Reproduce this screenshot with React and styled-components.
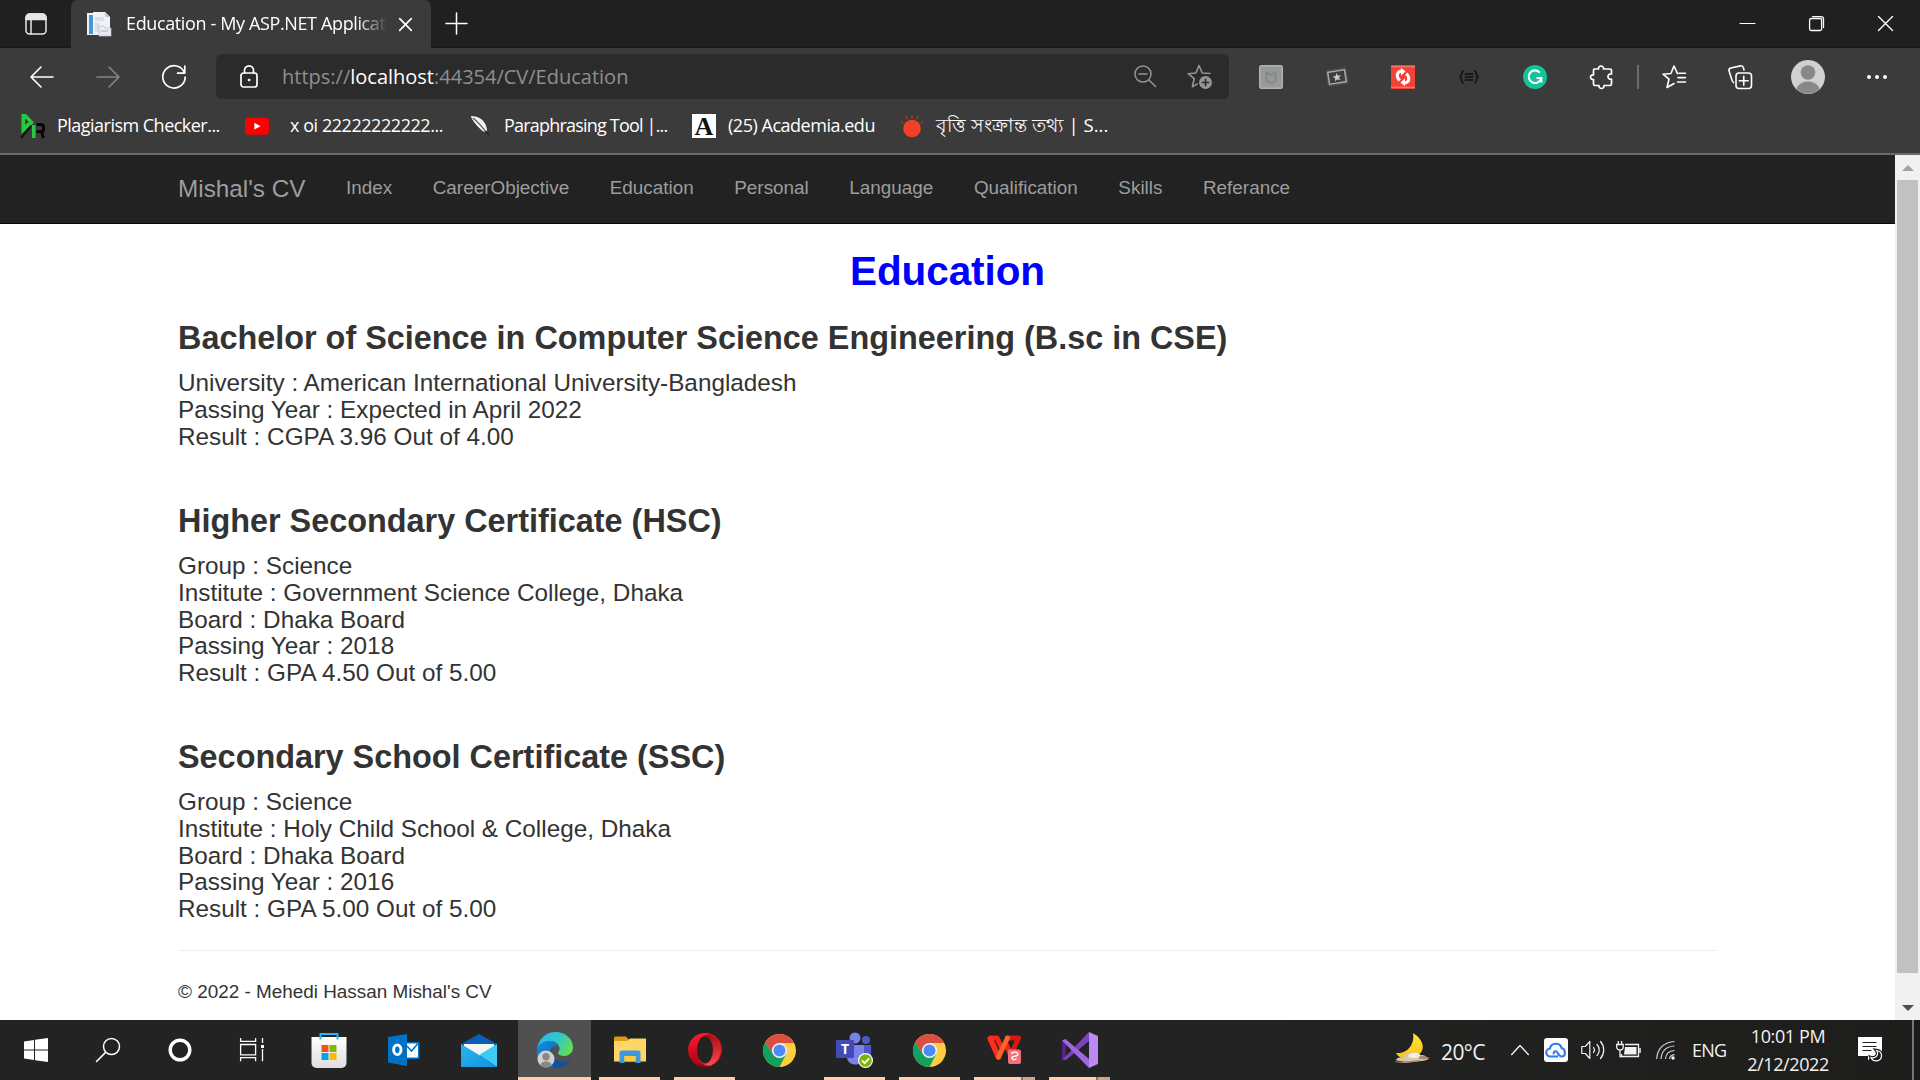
import React from 'react';
import styled, { createGlobalStyle } from 'styled-components';

const GlobalStyle = createGlobalStyle`
  *, *::before, *::after { box-sizing: border-box; }
  body { margin: 0; background: #fff; overflow: hidden; }
  svg { display: block; flex: none; overflow: visible; }
`;

const ui = `'Segoe UI', 'Open Sans', 'Noto Sans', sans-serif`;
const pageFont = `'Liberation Sans', Arial, sans-serif`;

const Screen = styled.div`
  width: 1920px;
  height: 1080px;
  display: flex;
  flex-direction: column;
  overflow: hidden;
  font-family: ${ui};
`;

/* ---------- browser chrome ---------- */
const TabStrip = styled.div`
  height: 48px;
  flex: none;
  display: flex;
  background: #202020;
  box-shadow: inset 0 -1px 0 #1a1a1a;
`;
const TabActions = styled.div`
  width: 71px;
  padding: 13px 0 0 25px;
`;
const Tab = styled.div`
  width: 360px;
  height: 48px;
  padding: 0 18px 0 16px;
  display: flex;
  align-items: center;
  background: #3b3b3b;
  border-radius: 7px 7px 0 0;
`;
const TabTitle = styled.div`
  width: 262px;
  margin: -2px 11px 0 15px;
  white-space: nowrap;
  font-size: 18px;
  line-height: 26px;
  letter-spacing: ${p => p.$ls || 0}px;
  color: #fff;
  mask-image: linear-gradient(90deg, #000 88%, transparent 100%);
`;
const NewTab = styled.div`
  padding: 13px 0 0 15px;
  flex: 1;
`;
const WindowButtons = styled.div`
  display: flex;
  height: 47px;
`;
const WindowButton = styled.div`
  width: 69px;
  display: flex;
  align-items: center;
  justify-content: center;
`;

const Toolbar = styled.div`
  height: 57px;
  flex: none;
  display: flex;
  align-items: center;
  background: #3b3b3b;
`;
const NavButtons = styled.div`
  width: 216px;
  display: flex;
  gap: 42px;
  padding-left: 30px;
`;
const AddressField = styled.div`
  width: 1013px;
  height: 45px;
  display: flex;
  align-items: center;
  padding: 0 17px 0 24px;
  background: #2b2b2b;
  border-radius: 6px;
`;
const Url = styled.div`
  flex: 1;
  margin: 0 0 0 24px;
  font-size: 20px;
  line-height: 30px;
  letter-spacing: ${p => p.$ls || 0}px;
  color: #8f8f8f;
  white-space: nowrap;
`;
const Host = styled.span`
  color: #fff;
`;
const FieldActions = styled.div`
  display: flex;
  gap: 31px;
`;
const Extensions = styled.div`
  display: flex;
  align-items: center;
  margin-left: 9px;
`;
const Slot = styled.div`
  width: ${p => p.$w || 66}px;
  height: 45px;
  display: flex;
  align-items: center;
  justify-content: center;
`;
const Divider = styled.div`
  width: 2px;
  height: 24px;
  margin: 0 2px 0 3px;
  background: #6b6b6b;
`;
const Bookmarks = styled.div`
  height: 50px;
  flex: none;
  display: flex;
  padding: 6px 0 0 21px;
  background: #3b3b3b;
  border-bottom: 2px solid #6a6a6a;
`;
const Bookmark = styled.div`
  width: ${p => p.$w}px;
  height: 30px;
  display: flex;
  align-items: center;
  gap: ${p => p.$gap || 12}px;
`;
const BookmarkText = styled.span`
  margin-top: -2px;
  font-size: ${p => p.$size || 18}px;
  line-height: 28px;
  letter-spacing: ${p => p.$ls || 0}px;
  color: #fff;
  white-space: nowrap;
`;

/* ---------- page ---------- */
const Viewport = styled.div`
  height: 865px;
  flex: none;
  display: flex;
  overflow: hidden;
`;
const Page = styled.div`
  width: 1895px;
  font-family: ${pageFont};
  color: #333;
  background: #fff;
`;
const Navbar = styled.nav`
  height: 69px;
  padding-left: 178px;
  display: flex;
  background: #222;
  border-bottom: 1px solid #080808;
  color: #9d9d9d;
`;
const Brand = styled.div`
  padding: 20px 20.25px 0 0;
  font-size: 24.3px;
  line-height: 27px;
  white-space: nowrap;
`;
const NavLink = styled.div`
  padding: 19px 20.25px 0;
  font-size: 18.9px;
  line-height: 27px;
  white-space: nowrap;
`;
const Content = styled.main`
  width: 1539px;
  margin-left: 178px;
  padding-top: 24.5px;
`;
const Title = styled.h2`
  margin: 0 0 28px;
  font-size: 40.5px;
  line-height: 44.55px;
  text-align: center;
  letter-spacing: -0.1px;
  color: #00f;
`;
const Section = styled.section`
  margin-bottom: ${p => p.$gap}px;
`;
const Degree = styled.h3`
  margin: 0 0 13.5px;
  font-size: 32.4px;
  line-height: 35.64px;
  white-space: nowrap;
`;
const Detail = styled.div`
  font-size: 24.3px;
  line-height: 26.73px;
  white-space: nowrap;
`;
const Footer = styled.footer`
  padding-top: 26.5px;
  border-top: 1px solid #eee;
  font-size: 18.9px;
  line-height: 27px;
`;
const Scrollbar = styled.div`
  width: 25px;
  display: flex;
  flex-direction: column;
  align-items: center;
  background: #f1f1f1;
`;
const Arrow = styled.div`
  height: ${p => (p.$down ? 47 : 25)}px;
  width: 100%;
  display: flex;
  justify-content: center;
  align-items: ${p => (p.$down ? 'flex-end' : 'flex-start')};
  padding: ${p => (p.$down ? '0 0 9px' : '10px 0 0')};
`;
const Thumb = styled.div`
  width: 21px;
  height: 793px;
  background: #c1c1c1;
`;

/* ---------- taskbar ---------- */
const Taskbar = styled.div`
  height: 60px;
  flex: none;
  display: flex;
  background: linear-gradient(90deg, #232323 0, #232323 65%, #1d1d1b 100%);
`;
const SystemButton = styled.div`
  width: 72px;
  display: flex;
  align-items: center;
  justify-content: center;
`;
const Apps = styled.div`
  display: flex;
  margin-left: 3px;
  flex: 1;
`;
const TaskbarApp = styled.div`
  width: ${p => (p.$active ? 76 : 75)}px;
  height: 60px;
  display: flex;
  flex-direction: column;
  align-items: center;
  padding: ${p => (p.$active ? '0 1px 0 2px' : '0')};
`;
const AppFace = styled.div`
  height: 57px;
  width: 100%;
  padding-top: 3px;
  display: flex;
  align-items: center;
  justify-content: center;
  background: ${p => (p.$active ? '#505050' : 'transparent')};
`;
const Underline = styled.div`
  width: ${p => (p.$active ? '100%' : '61px')};
  height: 3px;
  background: ${p => (p.$stacked
    ? 'linear-gradient(90deg, #ffcfad 47px, #8d7465 47px, #8d7465 49px, #cba58c 49px)'
    : '#ffcfad')};
`;
const Tray = styled.div`
  width: 527px;
  display: flex;
  align-items: center;
  color: #f2f2f2;
  border-right: 6px solid #1b1b19;
`;
const Weather = styled.div`
  width: 117px;
  display: flex;
  align-items: center;
  gap: 11px;
  margin-left: 1px;
  font-size: 21px;
  line-height: 30px;
  white-space: nowrap;
`;
const Temperature = styled.span`
  margin-top: 4px;
  letter-spacing: -0.6px;
`;
const TrayIcon = styled.div`
  width: ${p => p.$w}px;
  display: flex;
`;
const Language = styled.div`
  width: 54px;
  font-size: 18px;
  letter-spacing: -0.8px;
`;
const Clock = styled.div`
  width: 84px;
  display: flex;
  flex-direction: column;
  align-items: center;
  font-size: 18px;
  line-height: 28px;
  letter-spacing: -0.4px;
  white-space: nowrap;
`;
const Notifications = styled.div`
  margin-left: 28px;
  width: 54px;
`;
const ShowDesktop = styled.div`
  width: 2px;
  height: 60px;
  background: #777;
`;

/* ---------- icons ---------- */
const Line = ({ w = 24, h = 24, c = '#fff', sw = 1.6, children }) => (
  <svg width={w} height={h} viewBox={`0 0 ${w} ${h}`} fill="none" stroke={c} strokeWidth={sw} strokeLinecap="round" strokeLinejoin="round">
    {children}
  </svg>
);

const TabsIcon = () => (
  <Line w={22} h={22} c="#e6e6e6" sw={1.5}>
    <rect x="1" y="1" width="20" height="20" rx="3.5" />
    <path d="M1 5a4 4 0 0 1 4-4h12a4 4 0 0 1 4 4v1.5H1z" fill="#e6e6e6" />
    <path d="M6 7v14" />
  </Line>
);
const Favicon = () => (
  <svg width="24" height="24" viewBox="0 0 24 24">
    <path d="M0 1h17v22H0z" fill="#e9f0f7" />
    <path d="M2 3h4v19H2z" fill="#4a97cf" />
    <path d="M6 0h12l5 5v17H6z" fill="#f1f2f6" />
    <path d="M18 0v5h5z" fill="#c3cad8" />
    <path d="M8 5h9v4H8zM8 11h4v9H8z" fill="#dcdfe8" />
    <path d="M12 14h5l1 2h6v8H12z" fill="#e9ebf2" stroke="#b9bfcc" strokeWidth=".7" />
    <path d="M14 18h7v2h-7z" fill="#c9ced9" />
  </svg>
);
const BackIcon = ({ dim, flip }) => (
  <Line c={dim ? '#858585' : '#fff'} sw={1.6}>
    <path d={flip ? 'M1 12h22M13 2l10 10-10 10' : 'M23 12H1M11 2 1 12l10 10'} />
  </Line>
);
const ReloadIcon = () => (
  <Line sw={1.7}>
    <path d="M22.6 8.2A11.2 11.2 0 1 0 23.2 12M22.8 1v7.2h-7.2" />
  </Line>
);
const LockIcon = () => (
  <Line w={18} h={24} sw={1.7}>
    <rect x="1" y="8" width="16" height="14" rx="2.5" />
    <path d="M4.5 8V5.3a4.5 4.5 0 0 1 9 0V8" />
    <circle cx="9" cy="15" r="1" fill="#fff" strokeWidth=".8" />
  </Line>
);
const ZoomOutIcon = () => (
  <Line w={22} h={24} c="#959595" sw={1.5}>
    <circle cx="9" cy="10" r="8" />
    <path d="m15 16 6.5 6.5M5 10h8" />
  </Line>
);
const AddStarIcon = () => (
  <Line w={25} h={25} c="#959595" sw={1.6}>
    <path d="M23 9.5 15.200 9 12 1.500 8.900 9l-7.700.7 6 5-1.900 8 5-2.800" />
    <circle cx="18.500" cy="18.500" r="6.500" fill="#959595" stroke="none" />
    <path d="M18.500 15.300v6.400M15.300 18.500h6.400" stroke="#2b2b2b" />
  </Line>
);
const McAfeeIcon = () => (
  <svg width="24" height="24" viewBox="0 0 24 24">
    <rect x=".7" y=".7" width="22.6" height="22.6" rx="1.5" fill="#999" stroke="#aab4b9" strokeWidth="1.4" />
    <path d="M7.500 7.500v8.500l4.500 2 4.500-2V7.500L12 10z" fill="none" stroke="#84898c" strokeWidth="2.2" />
  </svg>
);
const TicketIcon = () => (
  <svg width="24" height="24" viewBox="0 0 24 24">
    <g transform="rotate(-9 12 12)">
      <rect x="1.500" y="3.500" width="21" height="17" rx="2" fill="#4b4b4b" />
      <rect x="3.500" y="6" width="17" height="12" fill="#3d3d3d" stroke="#aaa" strokeWidth="1.5" />
      <path d="m12 8 1.200 2.800 3 .2-2.300 1.900.8 2.900-2.700-1.600-2.700 1.600.8-2.900L7.800 11l3-.2z" fill="#ccc" />
    </g>
  </svg>
);
const SyncIcon = () => (
  <svg width="24" height="24" viewBox="0 0 24 24">
    <rect width="24" height="24" rx="1" fill="#f44336" />
    <path d="M0 1.700h24M0 22.300h24" stroke="#ff8177" />
    <path d="M8.700 15.500C4.500 11 6 6.500 10.500 6M15.300 8.500c4.200 4.500 2.700 9-1.800 9.500" fill="none" stroke="#fff" strokeWidth="3" />
    <path d="m10 2.800 4.500 3.700-4.500 4zM14 21.200l-4.500-3.700 4.500-4z" fill="#fff" />
  </svg>
);
const BracesIcon = () => (
  <Line w={20} h={14} c="#111" sw={1.7}>
    <path d="M4 1.200C2.200 1.200 3.500 6 1 7c2.500 1 1.200 5.800 3 5.800M16 1.200c1.800 0 .5 4.800 3 5.800-2.500 1-1.200 5.800-3 5.800M6.500 4h7M6.500 7h7M6.500 10h7" />
  </Line>
);
const GrammarlyIcon = () => (
  <svg width="24" height="24" viewBox="0 0 24 24">
    <circle cx="12" cy="12" r="12" fill="#15c39a" />
    <path d="M16.800 7.600A6.300 6.300 0 1 0 18.200 13h-4.700M18.300 13v4.500" fill="none" stroke="#fff" strokeWidth="2.1" />
  </svg>
);
const PuzzleIcon = () => (
  <Line sw={1.7}>
    <path d="M5 4h4.500c-.4-4 5.400-4 5 0H21c1 0 1.500.5 1.500 1.500V9c-4.700-.8-4.700 6 0 5.200V19c0 1-.5 1.500-1.500 1.500h-6c.4 4-5.400 4-5 0H6c-1 0-1.500-.5-1.500-1.500v-4.500c-4 .4-4-5 0-4.600V5.500C4.500 4.500 4.500 4 5 4z" />
  </Line>
);
const FavoritesIcon = () => (
  <Line sw={1.6}>
    <path d="M15.500 8.600 12 1 8.900 8.500 1 9.200l6 5L5 22.500l7-4M17 8.200h6.500M16 12.600h7.500M15.500 17h8" />
  </Line>
);
const CollectionsIcon = () => (
  <Line sw={1.6}>
    <path d="M5.500 17.500C4 16.500 3.800 15 3.300 13L1 5.800C.6 4 1.300 3.400 2.800 3L12.500.9c1.500-.4 2.500.4 2.900 1.800l.6 2.300" />
    <rect x="8" y="8" width="15.500" height="15.500" rx="3" />
    <path d="M15.750 11.200v9M11.200 15.750h9" />
  </Line>
);
const Avatar = ({ s = 34 }) => (
  <svg width={s} height={s} viewBox="0 0 34 34">
    <circle cx="17" cy="17" r="17" fill="#d2d0ce" />
    <circle cx="17" cy="12.500" r="7.300" fill="#8a8886" />
    <path d="M5.500 29.300C8 19 26 19 28.500 29.300a17 17 0 0 1-23 0z" fill="#8a8886" />
  </svg>
);
const DotsIcon = () => (
  <svg width="22" height="6" viewBox="0 0 22 6" fill="#fff">
    <circle cx="3" cy="3" r="2" /><circle cx="11" cy="3" r="2" /><circle cx="19" cy="3" r="2" />
  </svg>
);

const PlagIcon = () => (
  <svg width="24" height="24" viewBox="0 0 24 24">
    <path d="M.5 0H5l8 8.500L.5 20zM4 4.500v6l4-2.600z" fill="#27c93f" fillRule="evenodd" />
    <path d="M0 24 10 12" stroke="#111" strokeWidth="2" />
    <path d="M11 11h3.500v13H11z" fill="#27c93f" />
    <path d="M15.500 10.500h4.500c3.500 0 3.500 7 .5 7.200l2 6.300M15.500 17.700h5" fill="none" stroke="#050505" strokeWidth="2.8" />
  </svg>
);
const YouTubeIcon = () => (
  <svg width="24" height="24" viewBox="0 0 24 24">
    <rect x="0" y="3.700" width="24" height="17" rx="3.500" fill="red" />
    <path d="m9.300 8.800 6.300 3.400-6.300 3.400z" fill="#fff" />
  </svg>
);
const FeatherIcon = () => (
  <svg width="24" height="24" viewBox="0 0 24 24">
    <path d="M3 1.500c8 0 13 3 16 9 1.500 3 1.500 6 1.700 8-2.700.5-5-.5-8-3.500C8.500 11 4.500 6 3 1.500z" fill="#f2f2f2" stroke="#222" strokeWidth=".8" />
    <path d="M6 4c6 5 11 11 15 16.500" stroke="#555" strokeWidth="1.1" fill="none" />
    <path d="m18.500 17 3.500 4" stroke="#222" strokeWidth="1.800" />
  </svg>
);
const AcademiaBox = styled.span`
  width: 24px;
  height: 24px;
  background: #fff;
  color: #111;
  font: bold 26px/25px 'Liberation Serif', serif;
  display: flex;
  justify-content: center;
`;
const EggIcon = () => (
  <svg width="24" height="24" viewBox="0 0 24 24">
    <ellipse cx="12" cy="14.500" rx="8.800" ry="8.700" fill="#f04124" />
    <path d="M12 1v4M6 2l1.800 3.500M18 2l-1.800 3.500M.5 7.500l3.300 2M23.500 7.500l-3.300 2" stroke="#c83a25" />
  </svg>
);

const WindowsLogo = () => (
  <svg width="24" height="24" viewBox="0 0 24 24" fill="#fff">
    <path d="M0 3.500 10 2v9.500H0zM11 1.800 24 0v11.500H11zM0 12.500h10V22L0 20.500zM11 12.500h13V24l-13-1.800z" />
  </svg>
);
const SearchIcon = () => (
  <Line sw={1.5}><circle cx="15.500" cy="8.500" r="8" /><path d="M9.600 14.400.5 23.500" /></Line>
);
const CortanaIcon = () => (
  <Line><circle cx="12" cy="12" r="9.800" strokeWidth="3.400" /></Line>
);
const TaskViewIcon = () => (
  <svg width="24" height="24" viewBox="0 0 24 24" fill="none" stroke="#fff" strokeWidth="1.3">
    <path d="M.6 0v3.400h15V0M.6 6.500h15v10.300H.6zM.6 23.200v-3.500h15v3.500M22.500 0v5M22.500 11v12.200" />
    <rect x="21" y="7" width="3" height="3" fill="#fff" stroke="none" />
  </svg>
);
const StoreIcon = () => (
  <svg width="36" height="36" viewBox="0 0 36 36">
    <defs><linearGradient id="bag" x2="0" y2="1"><stop stopColor="#fff" /><stop offset="1" stopColor="#dedede" /></linearGradient></defs>
    <path d="M.5 5h35v26a5 5 0 0 1-5 5h-25a5 5 0 0 1-5-5z" fill="url(#bag)" />
    <path d="M9.500 7.500V2h17v5.500" fill="none" stroke="#27b3ee" strokeWidth="2" />
    <path d="M10.500 13h7v7h-7z" fill="#f25022" /><path d="M18.500 13h7v7h-7z" fill="#7fba00" />
    <path d="M10.500 21h7v7h-7z" fill="#00a4ef" /><path d="M18.500 21h7v7h-7z" fill="#ffb900" />
  </svg>
);
const OutlookIcon = () => (
  <svg width="32" height="32" viewBox="0 0 32 32">
    <path d="M18 8h12.500a1 1 0 0 1 1 1v15a1 1 0 0 1-1 1H18z" fill="#0072c6" />
    <path d="M19 9.500h11v14H19z" fill="#fff" />
    <path d="m19 12 4.500 5 6.500-7.500" fill="none" stroke="#0072c6" strokeWidth="1.5" />
    <path d="M0 3 19 0v32L0 28.500z" fill="#0072c6" />
    <ellipse cx="9.300" cy="15.800" rx="3.700" ry="4.800" fill="none" stroke="#fff" strokeWidth="2.9" />
  </svg>
);
const MailIcon = () => (
  <svg width="36" height="34" viewBox="0 0 36 34">
    <defs><linearGradient id="mail" x2="1" y2="1"><stop stopColor="#28b5f0" /><stop offset="1" stopColor="#1591e0" /></linearGradient></defs>
    <path d="M0 11 18 1l18 10v4H0z" fill="#0a5cb5" />
    <path d="M3 11h30v12H3z" fill="#f4f4f4" />
    <path d="M36 11v23L18 22z" fill="#3bcbf5" />
    <path d="M0 34h36L18 22 0 11z" fill="url(#mail)" />
  </svg>
);
const EdgeIcon = () => (
  <svg width="36" height="36" viewBox="0 0 36 36">
    <defs>
      <linearGradient id="edgeTop" x1="0" y1=".3" x2="1" y2=".7"><stop stopColor="#2fb4ee" /><stop offset=".5" stopColor="#30c8c8" /><stop offset="1" stopColor="#66e04c" /></linearGradient>
      <linearGradient id="edgeLow" x2="1" y2="1"><stop stopColor="#1390e0" /><stop offset="1" stopColor="#1057a8" /></linearGradient>
    </defs>
    <path d="M0 18C1 7 9 0 18.500 0 29 0 36 7.500 36 15c0 6-4.500 9-9 9-4 0-6-1.500-6-3 0-1 1.500-1.500 1.500-4.500 0-4-4-7.500-10-7.500C6 9 1 13 0 18z" fill="url(#edgeTop)" />
    <path d="M0 18c1-5.500 6-9 12-9 5.500 0 9 2.500 10 5.500-5-2.500-9 1.500-9 7 0 7 6 13 14 13.500C12 39.500-1 30 0 18z" fill="url(#edgeLow)" />
    <path d="M17.500 15.500c-3 2-4 7-.5 10.500 4.500 4.300 11.500 4.200 16.500 1.500-3 6-9.500 9-15.500 8.300C10 32 10 17 17.500 15.500z" fill="#1250a0" />
    <g transform="translate(0.500 18.500)"><Avatar s={17} /></g>
  </svg>
);
const ExplorerIcon = () => (
  <svg width="32" height="28" viewBox="0 0 32 28">
    <path d="M0 2a1.500 1.500 0 0 1 1.500-1.500H12L15 4l-2 3H0z" fill="#dc9b10" />
    <path d="M0 5h13l3-2.500h16v23H0z" fill="#ffd567" />
    <path d="M5.500 27V17a2.500 2.500 0 0 1 2.500-2.500h16a2.500 2.500 0 0 1 2.500 2.500v10h-5v-7h-11v7z" fill="#3d99de" />
    <path d="M10.500 20h11v5.500h-11z" fill="#ffc93c" />
  </svg>
);
const OperaIcon = () => (
  <svg width="34" height="34" viewBox="0 0 34 34">
    <defs>
      <linearGradient id="op" x2="0" y2="1"><stop stopColor="#ff1b2d" /><stop offset="1" stopColor="#a70014" /></linearGradient>
      <linearGradient id="op2" x2="0" y2="1"><stop stopColor="#a80c16" /><stop offset="1" stopColor="#ff4b4b" /></linearGradient>
    </defs>
    <circle cx="17" cy="17" r="17" fill="url(#op)" />
    <path d="M11 6.500C14 3 18 1.500 22 1.200A17 17 0 0 1 22 33c-4-.5-8-2-11-5.500z" fill="url(#op2)" />
    <ellipse cx="17" cy="17" rx="8" ry="13.500" fill="#232323" />
  </svg>
);
const ChromeIcon = () => (
  <svg width="33" height="33" viewBox="0 0 48 48">
    <circle cx="24" cy="24" r="24" fill="#ffcd42" />
    <path d="M24 13h21.300A24 24 0 0 0 3.200 12l11.300 17.500z" fill="#d94f43" />
    <path d="M3.200 12A24 24 0 0 0 24 48l9.500-18.500h-19z" fill="#12a05f" />
    <circle cx="24" cy="24" r="11" fill="#f1f1f1" />
    <circle cx="24" cy="24" r="8.700" fill="#4c8bf5" />
  </svg>
);
const TeamsLetter = styled.text`
  font: bold 14px 'Open Sans', sans-serif;
`;
const TeamsIcon = () => (
  <svg width="37" height="36" viewBox="0 0 37 36">
    <circle cx="19" cy="6" r="5.500" fill="#7b83eb" />
    <circle cx="30" cy="8" r="4" fill="#5059c9" />
    <path d="M25 13h10v10c0 5-4 7-9 5z" fill="#5059c9" />
    <path d="M11 13h17v12c0 10-17 10-17 0z" fill="#7b83eb" />
    <rect x="0" y="8" width="18" height="18" rx="1" fill="#444bb8" />
    <TeamsLetter x="9" y="22" textAnchor="middle" fill="#fff">T</TeamsLetter>
    <circle cx="29.500" cy="28.500" r="7.500" fill="#fff" />
    <circle cx="29.500" cy="28.500" r="6.300" fill="#7ab800" />
    <path d="m26 28.500 2.600 2.600 4.600-4.800" fill="none" stroke="#fff" strokeWidth="1.9" />
  </svg>
);
const WpsIcon = () => (
  <svg width="35" height="30" viewBox="0 0 35 30">
    <path d="M18 3h13.500L24 20" fill="none" stroke="#d8170f" strokeWidth="5" strokeLinejoin="round" />
    <path d="m19 9 5 12" stroke="#ef2a1a" strokeWidth="5" />
    <path d="M3 3h7l6 13" fill="none" stroke="#f5261a" strokeWidth="5" strokeLinejoin="round" />
    <path d="m3.200 3.500 8.300 18.500" stroke="#ff2d1e" strokeWidth="5.500" strokeLinecap="round" />
    <path d="M11.500 22 20.500 3" stroke="#ff6326" strokeWidth="5" strokeLinecap="round" />
    <rect x="21" y="14.500" width="13" height="14.500" rx="2" fill="#f27077" />
    <path d="M24.500 19c.5-2.500 6.500-2.500 6.500.3s-6 1-6 3.500c0 2 3.500 2.500 4.500.7" fill="none" stroke="#fff" strokeWidth="1.400" />
  </svg>
);
const VisualStudioIcon = () => (
  <svg width="36" height="36" viewBox="0 0 36 36">
    <path d="M0 8.500 4 10v16l-4 1.500z" fill="#52218a" />
    <path d="M27 0v9L4 28l-4-.5L3 25z" fill="#7d42c4" />
    <path d="m3.500 7 23.500 20v9L0 8.500z" fill="#9d68de" />
    <path d="M27 0 36 4v28l-9 4z" fill="#bb8af5" />
  </svg>
);

const MoonIcon = () => (
  <svg width="36" height="36" viewBox="0 0 36 36">
    <defs><linearGradient id="moon" x2="0" y2="1"><stop stopColor="#ffe23d" /><stop offset="1" stopColor="#f9c40f" /></linearGradient></defs>
    <path d="M19 1c10 6 14 17 4 23-8 5-18 3-21-3C13 22 21 13 19 1z" fill="url(#moon)" />
    <path d="M2 28c1-3 6-3 8-3 2-6 14-6 16-2 4-.5 6 1 6 2.500l3 1.500c-5 3-28 4-33 1z" fill="#d9c6ae" />
    <path d="M14 24c2-4 10-4 12-1 2 2-1 3-4 3s-8 0-8-2z" fill="#f3ede4" />
    <path d="M0 29c10 2 20-1 27-1-2 2-22 5-27 1zM26 24c4-1 8 2 10 2-4 1.500-9 2-12 0z" fill="#ab8b72" />
  </svg>
);
const CloudIcon = () => (
  <svg width="24" height="24" viewBox="0 0 24 24">
    <rect width="24" height="24" rx="3" fill="#fff" />
    <path d="M14 18.500H6.500a4 4 0 0 1-.5-8C7 4.500 16 4 17.500 10c4.500 1 4.500 8 .5 8.500-3.500.4-4-4-5.500-5-2-1-3.500 1-2.500 2.800" fill="none" stroke="#2f7bf0" strokeWidth="2.1" />
  </svg>
);
const VolumeIcon = () => (
  <Line w={24} h={20} c="#f2f2f2" sw={1.2}>
    <path d="M.8 6.500h3.500l4.500-5v17l-4.500-5H.8zM12.500 7.500c1.200 1.500 1.200 3.500 0 5M16 4.500c3 3.200 3 7.800 0 11M19.500 1.500c4.300 4.800 4.300 12.200 0 17" />
  </Line>
);
const BatteryIcon = () => (
  <svg width="25" height="20" viewBox="0 0 25 20" fill="none" stroke="#f2f2f2" strokeWidth="1.3">
    <path d="M9 4.500h13.500v12H5.500V14" /><path d="M24 8v5" strokeWidth="1.5" />
    <path d="M9 7h11.500v7.500H8z" fill="#f2f2f2" stroke="none" />
    <path d="M.7 4.500h6.500V7c0 4-6.500 4-6.500 0zM2.300 1v3.500M5.600 1v3.500M4 10.500v6h2" />
  </svg>
);
const WifiIcon = () => (
  <svg width="21" height="20" viewBox="0 0 21 20" fill="none" stroke="#d0d0d0" strokeWidth="1.2">
    <path d="M.7 19C1 9 8 2 18.500 1.500M5 19C5.500 11.500 10 6.500 18.500 6M9.500 19c.3-5 3.500-8.200 9-8.500M13.500 19c.2-2.300 2-4 5-4.300" />
    <circle cx="17" cy="18" r="1.700" fill="#fff" stroke="none" />
  </svg>
);
const NotifyIcon = () => (
  <svg width="25" height="26" viewBox="0 0 25 26">
    <path d="M0 0h24v19H13.500L10 23.500V19H0z" fill="#fff" />
    <path d="M4.500 5.500h14M4.500 9.500h14M4.500 13.500h9" stroke="#1d1d1b" strokeWidth="1.2" />
    <path d="M18.500 13.500c3 4-1 8.500-5.500 7 2 5 10.500 4.500 10.500-2 0-3-2-4.500-5-5z" fill="#1d1d1b" stroke="#1d1d1b" strokeWidth="3.4" />
    <path d="M18.500 13.500c3 4-1 8.500-5.500 7 2 5 10.500 4.500 10.500-2 0-3-2-4.500-5-5z" fill="#1d1d1b" stroke="#fff" strokeWidth="1.2" />
  </svg>
);

/* ---------- data ---------- */
const bookmarks = [
  { icon: <PlagIcon />, text: 'Plagiarism Checker...', w: 224, ls: -0.52 },
  { icon: <YouTubeIcon />, text: 'x oi 22222222222...', w: 222, gap: 21, ls: -0.45 },
  { icon: <FeatherIcon />, text: 'Paraphrasing Tool |...', w: 225, gap: 13, ls: -0.8 },
  { icon: <AcademiaBox>A</AcademiaBox>, text: '(25) Academia.edu', w: 208, ls: -0.48 },
  { icon: <EggIcon />, text: 'বৃত্তি সংক্রান্ত তথ্য | S...', w: 220, size: 18.6 },
];
const links = ['Index', 'CareerObjective', 'Education', 'Personal', 'Language', 'Qualification', 'Skills', 'Referance'];
const degrees = [
  {
    name: 'Bachelor of Science in Computer Science Engineering (B.sc in CSE)',
    gap: 53.73,
    lines: ['University : American International University-Bangladesh', 'Passing Year : Expected in April 2022', 'Result : CGPA 3.96 Out of 4.00'],
  },
  {
    name: 'Higher Secondary Certificate (HSC)',
    gap: 53.2,
    lines: ['Group : Science', 'Institute : Government Science College, Dhaka', 'Board : Dhaka Board', 'Passing Year : 2018', 'Result : GPA 4.50 Out of 5.00'],
  },
  {
    name: 'Secondary School Certificate (SSC)',
    gap: 27.5,
    lines: ['Group : Science', 'Institute : Holy Child School & College, Dhaka', 'Board : Dhaka Board', 'Passing Year : 2016', 'Result : GPA 5.00 Out of 5.00'],
  },
];
const apps = [
  { icon: <StoreIcon /> },
  { icon: <OutlookIcon /> },
  { icon: <MailIcon /> },
  { icon: <EdgeIcon />, open: true, active: true },
  { icon: <ExplorerIcon />, open: true },
  { icon: <OperaIcon />, open: true },
  { icon: <ChromeIcon /> },
  { icon: <TeamsIcon />, open: true },
  { icon: <ChromeIcon />, open: true },
  { icon: <WpsIcon />, open: true, stacked: true },
  { icon: <VisualStudioIcon />, open: true, stacked: true },
];

export default function App() {
  return (
    <Screen>
      <GlobalStyle />
      <TabStrip>
        <TabActions><TabsIcon /></TabActions>
        <Tab>
          <Favicon />
          <TabTitle $ls={-0.37}>Education - My ASP.NET Applicat</TabTitle>
          <Line w={13} h={13} sw={1.7}><path d="m.7.7 11.600 11.600M12.300.7.7 12.300" /></Line>
        </Tab>
        <NewTab><Line w={21} h={21} sw={1.5}><path d="M10.500 0v21M0 10.500h21" /></Line></NewTab>
        <WindowButtons>
          <WindowButton><Line w={15} h={15} sw={1.2}><path d="M0 7.500h15" /></Line></WindowButton>
          <WindowButton>
            <Line w={15} h={15} sw={1.3}>
              <rect x=".6" y="2.500" width="12" height="12" rx="1.500" />
              <path d="M3.500.6h8.500a2.500 2.500 0 0 1 2.500 2.500v8.500" />
            </Line>
          </WindowButton>
          <WindowButton><Line w={15} h={15} sw={1.4}><path d="m.5.5 14 14M14.500.5l-14 14" /></Line></WindowButton>
        </WindowButtons>
      </TabStrip>
      <Toolbar>
        <NavButtons><BackIcon /><BackIcon dim flip /><ReloadIcon /></NavButtons>
        <AddressField>
          <LockIcon />
          <Url>https://<Host>localhost</Host>:44354/CV/Education</Url>
          <FieldActions><ZoomOutIcon /><AddStarIcon /></FieldActions>
        </AddressField>
        <Extensions>
          <Slot><McAfeeIcon /></Slot>
          <Slot><TicketIcon /></Slot>
          <Slot><SyncIcon /></Slot>
          <Slot><BracesIcon /></Slot>
          <Slot><GrammarlyIcon /></Slot>
          <Slot><PuzzleIcon /></Slot>
          <Divider />
          <Slot><FavoritesIcon /></Slot>
          <Slot><CollectionsIcon /></Slot>
          <Slot $w={70}><Avatar /></Slot>
          <Slot $w={68}><DotsIcon /></Slot>
        </Extensions>
      </Toolbar>
      <Bookmarks>
        {bookmarks.map(b => (
          <Bookmark key={b.text} $w={b.w} $gap={b.gap}>
            {b.icon}
            <BookmarkText $ls={b.ls} $size={b.size}>{b.text}</BookmarkText>
          </Bookmark>
        ))}
      </Bookmarks>
      <Viewport>
        <Page>
          <Navbar>
            <Brand>Mishal's CV</Brand>
            {links.map(l => <NavLink key={l}>{l}</NavLink>)}
          </Navbar>
          <Content>
            <Title>Education</Title>
            {degrees.map(d => (
              <Section key={d.name} $gap={d.gap}>
                <Degree>{d.name}</Degree>
                {d.lines.map(t => <Detail key={t}>{t}</Detail>)}
              </Section>
            ))}
            <Footer>© 2022 - Mehedi Hassan Mishal's CV</Footer>
          </Content>
        </Page>
        <Scrollbar>
          <Arrow><svg width="12" height="6" viewBox="0 0 12 6"><path d="M0 6h12L6 0z" fill="#a3a3a3" /></svg></Arrow>
          <Thumb />
          <Arrow $down><svg width="12" height="6" viewBox="0 0 12 6"><path d="M0 0h12L6 6z" fill="#505050" /></svg></Arrow>
        </Scrollbar>
      </Viewport>
      <Taskbar>
        <SystemButton><WindowsLogo /></SystemButton>
        <SystemButton><SearchIcon /></SystemButton>
        <SystemButton><CortanaIcon /></SystemButton>
        <SystemButton><TaskViewIcon /></SystemButton>
        <Apps>
          {apps.map((a, i) => (
            <TaskbarApp key={i} $active={a.active}>
              <AppFace $active={a.active}>{a.icon}</AppFace>
              {a.open && <Underline $active={a.active} $stacked={a.stacked} />}
            </TaskbarApp>
          ))}
        </Apps>
        <Tray>
          <Weather><MoonIcon /><Temperature>20°C</Temperature></Weather>
          <TrayIcon $w={33}><Line w={18} h={10} c="#f2f2f2" sw={1.4}><path d="m.7 9.500 8.300-9 8.300 9" /></Line></TrayIcon>
          <TrayIcon $w={37}><CloudIcon /></TrayIcon>
          <TrayIcon $w={35}><VolumeIcon /></TrayIcon>
          <TrayIcon $w={40}><BatteryIcon /></TrayIcon>
          <TrayIcon $w={36}><WifiIcon /></TrayIcon>
          <Language>ENG</Language>
          <Clock><span>10:01 PM</span><span>2/12/2022</span></Clock>
          <Notifications><NotifyIcon /></Notifications>
          <ShowDesktop />
        </Tray>
      </Taskbar>
    </Screen>
  );
}
